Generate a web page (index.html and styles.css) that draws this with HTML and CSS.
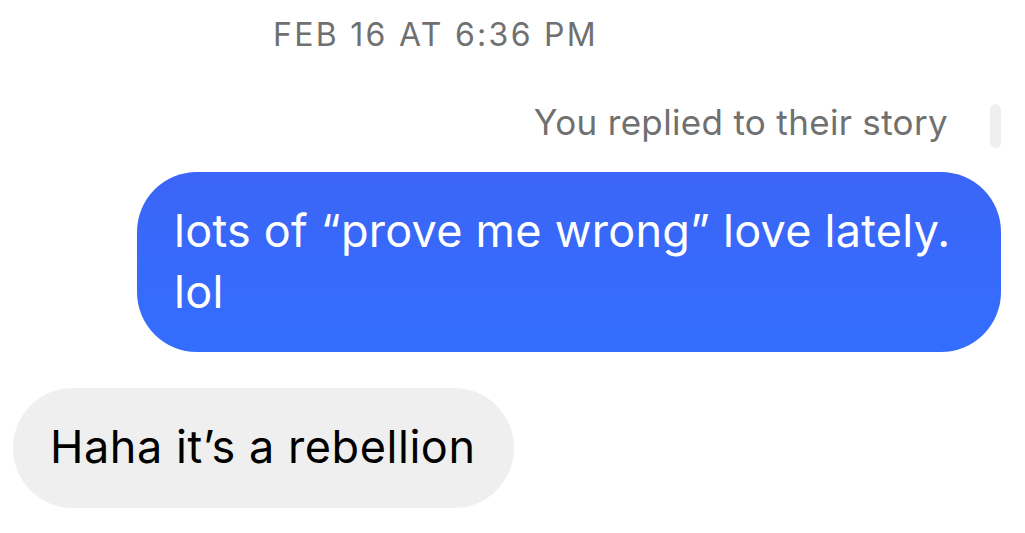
FILE: index.html
```html
<!DOCTYPE html>
<html>
<head>
<meta charset="utf-8">
<link rel="stylesheet" href="styles.css">
</head>
<body>
<div class="thread">
  <div class="timestamp">FEB 16 AT 6:36 PM</div>
  <div class="reply-note">
    <span class="reply-text">You replied to their story</span>
    <span class="story-bar"></span>
  </div>
  <div class="row row-out">
    <div class="bubble bubble-out">lots of “prove me wrong” love lately. lol</div>
  </div>
  <div class="row row-in">
    <div class="bubble bubble-in">Haha it’s a rebellion</div>
  </div>
</div>
</body>
</html>
```
FILE: styles.css
```css
html, body {
  margin: 0;
  padding: 0;
  background: #ffffff;
}
body {
  font-family: Inter, "Noto Sans", sans-serif;
  width: 1025px;
  height: 533px;
  overflow: hidden;
}
.thread {
  display: flex;
  flex-direction: column;
}
.timestamp {
  padding-left: 273px;
  margin-top: 15px;
  font-size: 32px;
  line-height: 40px;
  letter-spacing: 2.3px;
  color: #707070;
}
.reply-note {
  display: flex;
  justify-content: flex-end;
  align-items: flex-start;
  gap: 42px;
  margin-top: 45px;
  padding-right: 24px;
}
.reply-text {
  font-size: 35px;
  line-height: 44px;
  letter-spacing: 0.33px;
  color: #707070;
}
.story-bar {
  width: 11px;
  height: 44px;
  margin-top: 4px;
  border-radius: 6px;
  background: #efefef;
}
.row {
  display: flex;
}
.row-out {
  justify-content: flex-end;
  padding-right: 24px;
  margin-top: 24px;
}
.row-in {
  padding-left: 13px;
  margin-top: 36px;
}
.bubble {
  font-size: 45px;
  line-height: 61px;
  letter-spacing: 0.25px;
}
.bubble-out {
  width: 864px;
  box-sizing: border-box;
  padding: 28px 24px 30px 37px;
  border-radius: 60px;
  color: #ffffff;
  background: linear-gradient(180deg, #3b65f6 0%, #346eff 100%);
}
.bubble-in {
  padding: 28px 38px 31px 37px;
  border-radius: 60px;
  letter-spacing: 0.55px;
  color: #000000;
  background: #efefef;
}
```
